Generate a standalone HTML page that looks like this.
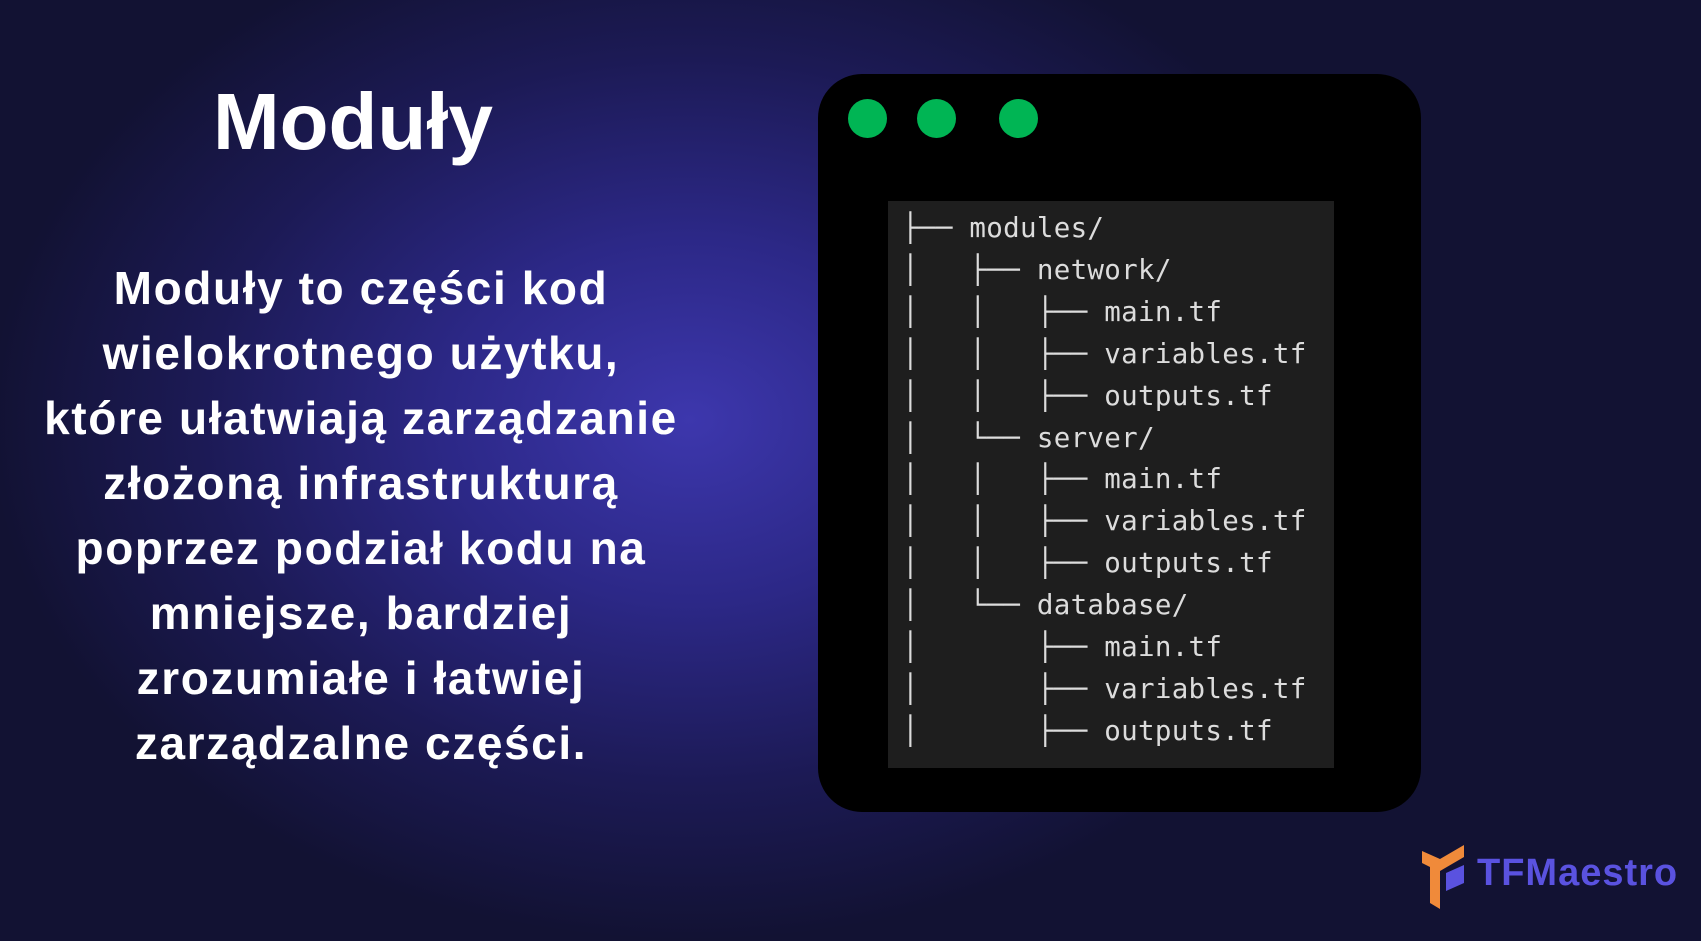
<!DOCTYPE html>
<html><head><meta charset="utf-8"><style>
html,body{margin:0;padding:0}
body{width:1701px;height:941px;overflow:hidden;position:relative;
background:radial-gradient(ellipse 700px 520px at 690px 420px,#3d37ad 0%,#2c2887 35%,#1c1a55 70%,#121233 100%);
font-family:"Liberation Sans","DejaVu Sans",sans-serif;color:#fff}
.title{position:absolute;left:0;width:706px;top:74px;text-align:center;font-weight:bold;font-size:80px;line-height:96px}
.body{position:absolute;left:0;width:722px;top:256px;text-align:center;font-weight:bold;font-size:46px;line-height:65px;letter-spacing:1.6px}
.win{position:absolute;left:818px;top:74px;width:603px;height:738px;background:#000;border-radius:44px}
.dot{position:absolute;top:99px;width:39px;height:39px;border-radius:50%;background:#00b554}
.code{position:absolute;left:888px;top:201px;width:446px;height:567px;background:#1e1e1e}
pre{position:absolute;left:902px;top:208px;margin:0;font-family:"DejaVu Sans Mono","Liberation Mono",monospace;font-size:27.5px;line-height:41.9px;color:#dcdcdc;letter-spacing:0.3px}
.logo{position:absolute;left:1477px;top:852px;font-size:38px;color:#5a52e0;font-family:"Liberation Sans",sans-serif;font-weight:bold;letter-spacing:1px}
</style></head><body>
<div class="title">Moduły</div>
<div class="body">Moduły to części kod<br>wielokrotnego użytku,<br>które ułatwiają zarządzanie<br>złożoną infrastrukturą<br>poprzez podział kodu na<br>mniejsze, bardziej<br>zrozumiałe i łatwiej<br>zarządzalne części.</div>
<div class="win"></div>
<div class="dot" style="left:848px"></div>
<div class="dot" style="left:917px"></div>
<div class="dot" style="left:999px"></div>
<div class="code"></div>
<pre>├── modules/
│   ├── network/
│   │   ├── main.tf
│   │   ├── variables.tf
│   │   ├── outputs.tf
│   └── server/
│   │   ├── main.tf
│   │   ├── variables.tf
│   │   ├── outputs.tf
│   └── database/
│       ├── main.tf
│       ├── variables.tf
│       ├── outputs.tf</pre>
<svg style="position:absolute;left:1420px;top:843px" width="50" height="68" viewBox="0 0 50 68">
<polygon points="2,8 20,16 20,66 10,60 10,24 2,20" fill="#f08a3a"/>
<polygon points="20,16 44,2 44,14 20,28" fill="#f08a3a"/>
<polygon points="26,30 44,22 44,40 26,48" fill="#5a52e0"/>
</svg>
<div class="logo">TFMaestro</div>
</body></html>
